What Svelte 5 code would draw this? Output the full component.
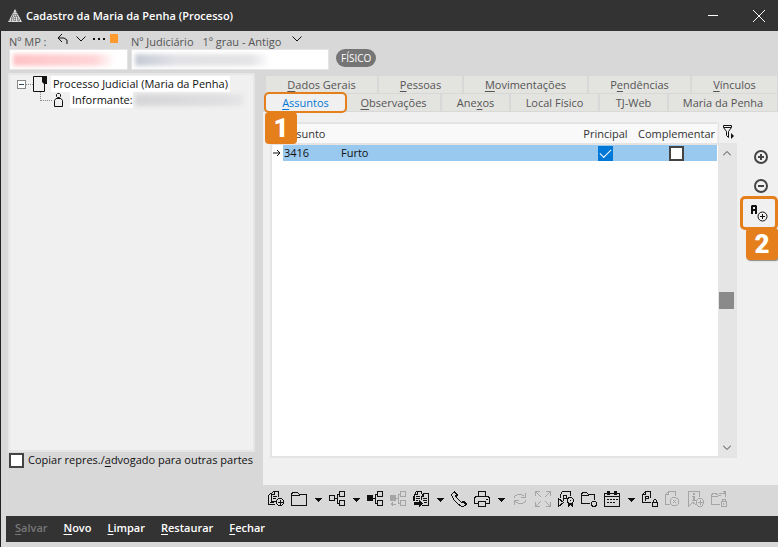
<script lang="ts">
	type Tab = { label: string; key: number; grow: number };

	// key is the index of the underlined access letter
	const topTabs: Tab[] = [
		{ label: "Dados Gerais", key: 0, grow: 111 },
		{ label: "Pessoas", key: 0, grow: 83 },
		{ label: "Movimentações", key: 0, grow: 123 },
		{ label: "Pendências", key: 1, grow: 101 },
		{ label: "Vínculos", key: 0, grow: 85 },
	];

	const bottomTabs: Tab[] = [
		{ label: "Assuntos", key: 0, grow: 79 },
		{ label: "Observações", key: 0, grow: 93 },
		{ label: "Anexos", key: 3, grow: 67 },
		{ label: "Local Físico", key: -1, grow: 87 },
		{ label: "TJ-Web", key: -1, grow: 67 },
		{ label: "Maria da Penha", key: -1, grow: 108 },
	];

	const actions = ["Salvar", "Novo", "Limpar", "Restaurar", "Fechar"];

	// line is stroked, solid is filled, both on a 17px pixel grid
	const tools = [
		{
			name: "Adicionar documento",
			line: "M7 13.5H.5V4.5L2.5 2.5M9 10.5H3.5M3.5 11V2.5L5.5 .5H10.5V6M6.5 .5V3.5H3.5M5 5.5H9M5 7.5H8M2 11.5H6M10.5 7.5H13.5L15.5 9.5V12.5L13.5 14.5H10.5L8.5 12.5V9.5ZM12 9V14M9.5 11.5H14.5",
			solid: "",
		},
		{ name: "Pasta", line: "M.5 14.5V2.5L2.5 1.5H6.5L8.5 3.5H15.5V14.5ZM.5 4.5H8.5", solid: "", menu: true },
		{ name: "Estrutura", line: "M.5 4.5H5.5V9.5H.5ZM6 7.5H8.5M10 3.5H8.5V12.5H10M10.5 .5H15.5V5.5H10.5ZM10.5 9.5H15.5V14.5H10.5Z", solid: "", menu: true },
		{ name: "Vincular", line: "M6 7.5H8.5M10 3.5H8.5V12.5H10M10.5 .5H15.5V5.5H10.5ZM10.5 9.5H15.5V14.5H10.5Z", solid: "M0 4H6V10H0Z" },
		{ name: "Desvincular", line: "M6 7.5H8.5M10 3.5H8.5V12.5H10M10.5 .5H15.5V5.5H10.5ZM10.5 9.5H15.5V14.5H10.5ZM1 13.5H6", solid: "M0 4H6V10H0ZM0 13L3 11V16Z", off: true },
		{
			name: "Mover documentos",
			line: "M1.5 10V3.5L3.5 .5H8.5V3M4.5 .5V3.5H1.5M.5 10V5M3 5.5H7M3 7.5H7M3 9.5H5M8.5 9V5.5L10.5 2.5H15.5V14.5H8.5M10.5 2.5V5.5H8.5M10 7.5H14M10 9.5H14M11 11.5H14",
			solid: "M1 11H6V9L10 12L6 16V14H1Z",
			menu: true,
		},
		{ name: "Telefone", line: "M.5 3.5L3.5 .5L5.5 3.5L4.5 5.5L10.5 11.5L12.5 10.5L15.5 13.5L12.5 15.5H10.5L6.5 12.5L2.5 8.5Z", solid: "M2 1L4 0L7 4L6 6L4 5L5 4ZM11 10H13L16 13V14H14L12 12H10Z" },
		{ name: "Imprimir", line: "M4.5 5V.5H11.5V5M4 12.5H.5V6.5L2.5 5.5H13.5L15.5 6.5V12.5H12M4.5 10.5H11.5V15.5H4.5ZM12 8.5H14", solid: "", menu: true },
		{ name: "Atualizar", line: "M2.5 6.5V5.5L5.5 3.5H9.5L12.5 5.5M13.5 2V6.5H9M13.5 9V10.5L10.5 12.5H6.5L3.5 10.5M2.5 14V9.5H7", solid: "", off: true },
		{ name: "Expandir", line: "M.5 5V.5H5M1 1L6 6M11 .5H15.5V5M15 1L10 6M15.5 11V15.5H11M15 15L10 10M5 15.5H.5V11M1 15L6 10", solid: "", off: true },
		{ name: "Certificar", line: "M2.5 7V3.5L4.5 .5H12.5V5M.5 7.5V15.5L5.5 11.5ZM5.5 10V4.5H8.5V7.5H6M10.5 6.5H13.5L15.5 8.5V10.5L13.5 12.5H10.5L9.5 10.5V8.5ZM12 9V10", solid: "M10 12H15V16L12 14L10 16Z" },
		{ name: "Configurar pasta", line: "M9 12.5H.5V2.5L2.5 1.5H5.5L7.5 3.5H13.5V9M.5 4.5H7.5M11.5 10.5H14.5L15.5 11.5V13.5L14.5 15.5H11.5L10.5 13.5V11.5Z", solid: "" },
		{ name: "Agenda", line: "M.5 2.5H15.5V15.5H.5ZM1 5.5H15M6 8.5H8M9 8.5H11M12 8.5H14M3 8.5H5M3 11.5H5M6 11.5H8M9 11.5H11", solid: "M3 0H6V4H3ZM10 0H13V4H10Z", menu: true },
		{ name: "Proteger peça", line: "M9 11.5H.5V3.5L3.5 .5H8.5V7M3.5 1V3.5H1M3.5 10V5.5H6.5V7.5H4M10.5 11.5H15.5V15.5H10.5ZM11.5 11V9.5L12.5 8.5H13.5L14.5 9.5V11", solid: "" },
		{ name: "Cancelar documento", line: "M5 13.5H.5V3.5L3.5 .5H10.5V5M3.5 1V3.5H1M7.5 6.5H10.5L13.5 8.5V12.5L11.5 14.5H7.5L5.5 12.5V8.5ZM8 9L11 12M11 9L8 12", solid: "", off: true },
		{ name: "Adicionar informação", line: "M8 13.5L4.5 11.5L.5 15.5V.5H11.5V6M10.5 7.5H13.5L15.5 9.5V12.5L13.5 15.5H10.5L8.5 13.5V9.5ZM12 9V14M9.5 11.5H14.5", solid: "M5 2H7V4H5ZM4 5H7V9H8V10H4V9H5V6H4Z", off: true },
		{ name: "Proteger pasta", line: "M9 13.5H.5V3.5L2.5 2.5H5.5L6.5 4.5M.5 5.5H6L8.5 4.5H10M8 2.5H13.5V.5M14.5 1V6M10.5 10.5H15.5V15.5H10.5ZM11.5 10V8.5H14.5V10M12.5 12V14", solid: "M11 0H15V4Z", off: true },
	];

	let selected = $state("Assuntos");
	let principal = $state(true);
	let complementar = $state(false);
	let copyRepresentatives = $state(false);
</script>

{#snippet accessLabel(label: string, key: number)}
	{#if key < 0}{label}{:else}{label.slice(0, key)}<u>{label[key]}</u>{label.slice(key + 1)}{/if}
{/snippet}

{#snippet chevron()}
	<svg width="10" height="6" viewBox="0 0 10 6"><path d="M.5 .5L5 5L9.5 .5" /></svg>
{/snippet}

<div class="window">
	<header class="titlebar">
		<svg class="logo" width="14" height="14" viewBox="0 0 14 14">
			<path d="M7 0L14 13H0Z" fill="#ddd" />
			<path d="M6 3L3 13M8 3L11 13M7 5V13M3 9H11M4 7H10M1 11H13" stroke="#555" stroke-dasharray="1 1" fill="none" />
		</svg>
		<h1>Cadastro da Maria da Penha (Processo)</h1>
		<button aria-label="Minimizar"><svg width="12" height="12" viewBox="0 0 12 12"><path d="M1 5.5H11" /></svg></button>
		<button aria-label="Fechar janela"><svg width="12" height="12" viewBox="0 0 12 12"><path d="M0 0L12 12M12 0L0 12" /></svg></button>
	</header>

	<div class="body">
		<div class="fields">
			<div class="mp">
				<div class="field-label">
					<label for="mp">Nº MP :</label>
					<button class="undo" aria-label="Desfazer"><svg width="12" height="11" viewBox="0 0 12 11"><path d="M5 0L1 4L5 8M1 4H7L10 6V10" /></svg></button>
					<button aria-label="Opções do número">{@render chevron()}</button>
					<button aria-label="Mais">
						<svg width="12" height="4" viewBox="0 0 12 4"><path class="solid" d="M0 1H2V3H0ZM5 1H7V3H5ZM10 1H12V3H10Z" /></svg>
					</button>
					<span class="flag"></span>
				</div>
				<div class="entry">
					<input id="mp" type="text" />
					<span class="smudge pink"></span>
				</div>
			</div>
			<div class="court">
				<div class="field-label">
					<label for="court">Nº Judiciário</label>
					<span class="grade">1º grau - Antigo</span>
					<button class="grade-menu" aria-label="Escolher grau">{@render chevron()}</button>
				</div>
				<div class="entry">
					<input id="court" type="text" />
					<span class="smudge blue"></span>
				</div>
			</div>
			<span class="pill">FÍSICO</span>
		</div>

		<div class="columns">
			<aside>
				<ul class="tree">
					<li>
						<button class="toggle" aria-label="Recolher"></button>
						<span class="dash"></span>
						<svg width="15" height="16" viewBox="0 0 15 16"><path d="M.5 .5H13.5V6M11.5 8V15.5H.5V.5" /><path class="solid" d="M9 0H14V8H11L9 6Z" /></svg>
						<span class="node">Processo Judicial (Maria da Penha)</span>
					</li>
					<li class="child">
						<span class="elbow"></span>
						<svg width="11" height="14" viewBox="0 0 11 14"><path d="M4.5 .5H6.5L7.5 1.5V3.5L6.5 4.5H4.5L3.5 3.5V1.5ZM3 5.5H8L9.5 7.5V13.5H1.5V7.5L3 5.5" /></svg>
						<span class="node">Informante:</span>
						<span class="smudge name"></span>
					</li>
				</ul>
				<label class="copy">
					<input type="checkbox" bind:checked={copyRepresentatives} />
					<span>Copiar repres./<u>a</u>dvogado para outras partes</span>
				</label>
			</aside>

			<section>
				<nav>
					{#each [topTabs, bottomTabs] as row}
						<div class="tab-row">
							{#each row as tab}
								<button class="tab" class:active={tab.label === selected} style="flex-grow: {tab.grow}" onclick={() => (selected = tab.label)}>
									<span>{@render accessLabel(tab.label, tab.key)}</span>
									{#if tab.label === "Assuntos"}<b class="step one">1</b>{/if}
								</button>
							{/each}
						</div>
					{/each}
				</nav>

				<div class="panel">
					<div class="list">
						<div class="sheet"></div>
						<table>
							<thead>
								<tr>
									<th class="pointer"></th>
									<th class="code">Assunto</th>
									<th></th>
									<th class="principal">Principal</th>
									<th class="complementar">Complementar</th>
								</tr>
							</thead>
							<tbody>
								<tr>
									<td class="pointer">
										<svg width="8" height="8" viewBox="0 0 8 8"><path d="M0 4H7M4 1L7 4L4 7" /></svg>
									</td>
									<td>3416</td>
									<td>Furto</td>
									<td class="mark"><input type="checkbox" aria-label="Principal" bind:checked={principal} /></td>
									<td class="mark"><input type="checkbox" aria-label="Complementar" bind:checked={complementar} /></td>
								</tr>
							</tbody>
						</table>
						<button class="filter" aria-label="Filtrar">
							<svg width="12" height="15" viewBox="0 0 12 15"><path d="M.5 .5H8.5V2.5L5.5 6.5V12.5L3.5 10.5V6.5L.5 2.5ZM1 2.5H8" /><path class="solid" d="M8 8L11 11L8 14Z" /></svg>
						</button>
						<div class="scrollbar">
							<button aria-label="Subir"><svg width="8" height="5" viewBox="0 0 8 5"><path d="M0 4.5L4 .5L8 4.5" /></svg></button>
							<span class="thumb"></span>
							<button aria-label="Descer"><svg width="8" height="5" viewBox="0 0 8 5"><path d="M0 .5L4 4.5L8 .5" /></svg></button>
						</div>
					</div>
					<div class="side">
						<button aria-label="Adicionar"><svg width="14" height="14" viewBox="0 0 14 14"><circle cx="7" cy="7" r="6" /><path d="M7 4V10M4 7H10" /></svg></button>
						<button aria-label="Remover"><svg width="14" height="14" viewBox="0 0 14 14"><circle cx="7" cy="7" r="6" /><path d="M4 7H10" /></svg></button>
						<button class="framed" aria-label="Adicionar assunto">
							<svg width="17" height="17" viewBox="0 0 17 17">
								<path class="solid" d="M1 0H5L6 1V9H4V6H2V9H0V1ZM2 2V4H4V2Z" fill-rule="evenodd" />
								<circle cx="11.5" cy="11.5" r="4.5" />
								<path d="M11.5 9V14M9 11.5H14" />
							</svg>
							<b class="step two">2</b>
						</button>
					</div>
				</div>

				<div class="toolbar">
					{#each tools as tool}
						<button disabled={tool.off} aria-label={tool.name}>
							<svg width="17" height="17" viewBox="0 0 17 17"><path d={tool.line} /><path class="solid" d={tool.solid} /></svg>
						</button>
						{#if tool.menu}
							<button class="drop" aria-label="Opções: {tool.name}">
								<svg width="7" height="4" viewBox="0 0 7 4"><path class="solid" d="M0 0H7L4 4H3Z" /></svg>
							</button>
						{/if}
					{/each}
				</div>
			</section>
		</div>

		<footer>
			{#each actions as action, i}
				<button disabled={i === 0}>{@render accessLabel(action, 0)}</button>
			{/each}
		</footer>
	</div>
</div>

<style>
	:global(body) {
		background: #d8d8d8;
	}

	.window {
		display: flex;
		flex-direction: column;
		min-height: 100vh;
		font: 11px/16px "Open Sans", sans-serif;
		color: #111;
	}

	.window * {
		box-sizing: border-box;
	}

	button {
		display: flex;
		align-items: center;
		justify-content: center;
		padding: 0;
		border: 0;
		background: none;
		font: inherit;
		color: inherit;
	}

	u {
		text-underline-offset: 2px;
	}

	svg {
		flex: none;
		display: block;
		fill: none;
		stroke: currentColor;
	}

	svg .solid {
		fill: currentColor;
		stroke: none;
	}

	.titlebar {
		display: flex;
		align-items: center;
		height: 31px;
		padding: 0 7px 0 8px;
		background: #333;
		color: #fff;
	}

	.titlebar .logo {
		stroke: none;
	}

	.titlebar h1 {
		flex: 1;
		margin: 0 0 0 4px;
		font-size: 11px;
		font-weight: 600;
	}

	.titlebar button {
		width: 24px;
		height: 31px;
		margin-left: 22px;
	}

	.body {
		flex: 1;
		display: flex;
		flex-direction: column;
		padding-bottom: 5px;
		border-left: 1px solid #222;
	}

	.fields {
		display: flex;
		align-items: flex-end;
		gap: 3px;
		height: 39px;
		padding-left: 8px;
	}

	.mp {
		width: 119px;
	}

	.court {
		width: 198px;
	}

	.field-label {
		display: flex;
		height: 16px;
		color: #555;
		line-height: 18px;
		white-space: nowrap;
	}

	.field-label button {
		height: 12px;
		margin-left: 7px;
		color: #111;
	}

	.field-label .undo {
		margin-left: 10px;
	}

	.field-label .grade-menu {
		margin-left: 11px;
	}

	.flag {
		width: 8px;
		height: 9px;
		margin: 1px 0 0 5px;
		background: #ff9a2e;
	}

	.grade {
		margin-left: 9px;
	}

	.entry {
		display: grid;
		height: 21px;
		align-items: center;
	}

	.entry > * {
		grid-area: 1 / 1;
	}

	.entry input {
		width: 100%;
		height: 21px;
		padding: 0 4px;
		border: 1px solid #e4e4e4;
		background: #fff;
		font: inherit;
	}

	.smudge {
		height: 12px;
		filter: blur(2px);
		pointer-events: none;
	}

	.pink {
		width: 102px;
		margin-left: 4px;
		background: linear-gradient(90deg, #ffc3c6, #ffd6d8 80%, #fff);
	}

	.blue {
		width: 136px;
		margin-left: 4px;
		background: linear-gradient(90deg, #c5cad5, #e2e2e6 30%, #e4e4e7 85%, #fff);
	}

	.name {
		width: 108px;
		margin-left: 2px;
		background: linear-gradient(90deg, #d6d6d9, #dfdfe2 80%, #e6e6e8);
	}

	.pill {
		height: 18px;
		margin: 0 0 3px 4px;
		padding: 0 5px;
		border-radius: 9px;
		background: #757575;
		color: #fff;
		font-size: 10px;
		line-height: 18px;
	}

	.columns {
		flex: 1;
		display: grid;
		grid-template-columns: 247px 1fr;
		gap: 8px;
		padding-left: 7px;
	}

	aside {
		display: flex;
		flex-direction: column;
		padding: 3px 0 48px;
	}

	.tree {
		flex: 1;
		margin: 0;
		padding: 1px 0 0 7px;
		border: 2px solid #e6e6e6;
		background: #f0f0f0;
		list-style: none;
	}

	.tree li {
		display: flex;
		align-items: center;
		height: 16px;
		white-space: nowrap;
	}

	.toggle {
		width: 9px;
		height: 9px;
		border: 1px solid #888;
		background: linear-gradient(#345, #345) center / 5px 1px no-repeat #fff;
	}

	.dash {
		width: 7px;
		border-top: 1px dotted #888;
	}

	.node {
		margin-left: 3px;
		padding: 0 2px;
		background: #fff;
	}

	.elbow {
		width: 12px;
		height: 9px;
		margin: 0 1px 8px 23px;
		border: dotted #888;
		border-width: 0 0 1px 1px;
	}

	.child .node {
		margin-left: 6px;
		padding-right: 0;
	}

	input[type="checkbox"] {
		appearance: none;
		display: grid;
		place-items: center;
		width: 15px;
		height: 15px;
		margin: 0;
		border: 2px solid #444;
		background: #fff;
	}

	input[type="checkbox"]:checked {
		border-color: #0078d7;
		background: #0078d7;
	}

	input[type="checkbox"]:checked::after {
		content: "";
		width: 10px;
		height: 5px;
		margin-top: -3px;
		border: solid #fff;
		border-width: 0 0 1px 1px;
		rotate: -45deg;
	}

	.copy {
		display: flex;
		align-items: center;
		gap: 4px;
		padding-left: 1px;
		white-space: nowrap;
	}

	section {
		display: flex;
		flex-direction: column;
		min-width: 0;
	}

	nav {
		display: grid;
		gap: 1px;
		padding: 6px 1px 1px 3px;
	}

	.tab-row {
		display: flex;
		gap: 2px;
	}

	.tab {
		position: relative;
		flex: 1 1 0;
		min-width: 0;
		height: 17px;
		background: #e3e3e0;
		color: #555;
		white-space: nowrap;
	}

	.tab.active {
		background: #f0f0f0;
		color: #0078d7;
		outline: 2px solid #e47f1c;
		border-radius: 3px;
		z-index: 1;
	}

	.step {
		position: absolute;
		width: 32px;
		height: 32px;
		border-radius: 4px;
		background: #e47f1c;
		color: #fff;
		font: 900 26px/32px Roboto, sans-serif;
		text-align: center;
	}

	.one {
		top: 18px;
		left: -1px;
	}

	.two {
		top: 29px;
		right: -3px;
		box-shadow: 1px 1px 1px #888;
	}

	.panel {
		flex: 1;
		display: flex;
		padding: 10px 0 27px 7px;
		background: #f0f0f0;
	}

	.list {
		flex: 1;
		display: grid;
		grid-template: 21px 1fr / 1fr 19px;
	}

	.sheet {
		grid-area: 2 / 1 / 3 / 3;
		border: 2px solid #e4e4e4;
		background: #fff;
	}

	table {
		grid-area: 1 / 1 / 3 / 2;
		align-self: start;
		width: 100%;
		padding: 0 1px 0 2px;
		border-collapse: separate;
		border-spacing: 0;
		table-layout: fixed;
	}

	th {
		height: 23px;
		padding: 0 0 0 1px;
		border: solid #e4e4e4;
		border-width: 2px 0;
		background: #f9f9f9;
		color: #333;
		font-weight: 400;
		text-align: left;
	}

	td {
		height: 16px;
		padding: 0 0 0 1px;
		background: #99c9ef;
		line-height: 16px;
	}

	.pointer {
		width: 11px;
	}

	td.pointer {
		background: #fff;
	}

	th.code {
		width: 57px;
	}

	th.principal {
		width: 61px;
		padding: 0;
		text-align: center;
	}

	th.complementar {
		width: 81px;
		padding: 0;
		text-align: center;
	}

	td.mark {
		padding: 0;
	}

	td.mark input {
		margin: 0 auto;
	}

	.filter {
		grid-area: 1 / 2;
		padding: 0 0 0 2px;
		border-left: 1px solid #e4e4e4;
	}

	.scrollbar {
		grid-area: 2 / 2;
		display: flex;
		flex-direction: column;
		justify-content: space-between;
		align-items: center;
		margin: 2px 2px 2px 0;
		background: #e5e5e5;
		color: #444;
	}

	.scrollbar button {
		width: 17px;
		height: 17px;
	}

	.thumb {
		width: 15px;
		height: 17px;
		background: #8a8a8a;
	}

	.side {
		display: flex;
		flex-direction: column;
		align-items: center;
		width: 41px;
		padding: 20px 0 0 6px;
		color: #444;
	}

	.side button {
		height: 29px;
	}

	.side svg {
		stroke-width: 2px;
	}

	.side .framed {
		position: relative;
		align-self: flex-end;
		width: 38px;
		height: 34px;
		margin-top: -4px;
		border: 3px solid #e47f1c;
		border-radius: 5px;
		color: #111;
	}

	.side .framed svg {
		stroke-width: 1px;
	}

	.toolbar {
		display: flex;
		align-items: center;
		gap: 6px;
		height: 31px;
		padding: 0 0 2px 5px;
		color: #111;
	}

	.toolbar button:disabled {
		color: #a5a5a5;
	}

	.toolbar svg {
		shape-rendering: crispEdges;
	}

	.toolbar .drop {
		width: 9px;
	}

	footer {
		display: flex;
		align-items: center;
		gap: 16px;
		height: 26px;
		margin-left: 5px;
		padding: 0 0 2px 9px;
		background: #333;
		color: #fff;
		font-weight: 600;
	}

	footer button:disabled {
		color: #777;
	}
</style>
